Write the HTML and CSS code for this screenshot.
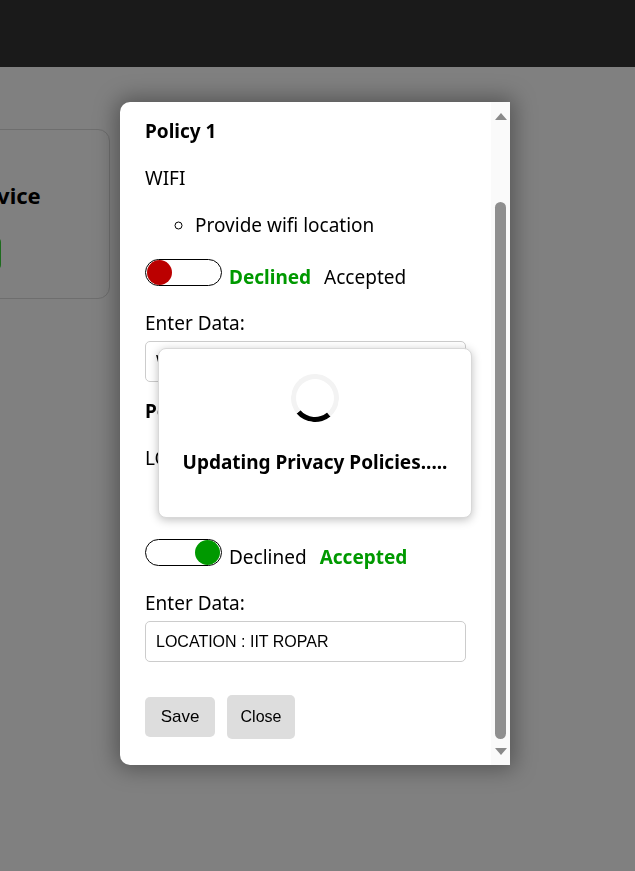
FILE: index.html
```html
<!DOCTYPE html>
<html>
<head>
<meta charset="utf-8">
<link rel="stylesheet" href="styles.css">
</head>
<body>
<header class="topbar"></header>
<main class="page">
  <section class="bg-card">
    <h2 class="bg-title">Service</h2>
    <div class="bg-btn"></div>
  </section>
</main>

<div class="modal">
  <div class="modal-content">
    <div class="policy">
      <h3 class="policy-title">Policy 1</h3>
      <p class="policy-name">WIFI</p>
      <ul class="policy-list"><li>Provide wifi location</li></ul>
      <div class="toggle-row">
        <span class="toggle off"><span class="knob"></span></span>
        <span class="state first active">Declined</span>
        <span class="state second">Accepted</span>
      </div>
      <label class="data-label">Enter Data:</label>
      <input class="data-input" type="text" value="WIFI : IIT ROPAR">
    </div>
    <div class="policy">
      <h3 class="policy-title">Policy 2</h3>
      <p class="policy-name">LOCATION</p>
      <ul class="policy-list"><li>Provide your location</li></ul>
      <div class="toggle-row">
        <span class="toggle on"><span class="knob"></span></span>
        <span class="state first">Declined</span>
        <span class="state second active">Accepted</span>
      </div>
      <label class="data-label">Enter Data:</label>
      <input class="data-input" type="text" value="LOCATION : IIT ROPAR">
    </div>
    <div class="actions">
      <button class="btn save">Save</button>
      <button class="btn close">Close</button>
    </div>
  </div>
  <div class="scrollbar">
    <span class="arrow up"></span>
    <div class="track"><div class="thumb"></div></div>
    <span class="arrow down"></span>
  </div>

  <div class="loader">
    <div class="spinner"></div>
    <p class="loader-text">Updating Privacy Policies.....</p>
  </div>
</div>
</body>
</html>
```
FILE: styles.css
```css
* { box-sizing: border-box; }
html, body { margin: 0; padding: 0; }
body {
  background: #808080;
  font-family: "Noto Sans", "DejaVu Sans", sans-serif;
  color: #000;
  width: 635px;
  height: 871px;
  overflow: hidden;
}
.topbar {
  height: 67px;
  background: #1a1a1a;
}
.page {
  display: flex;
  padding-top: 62px;
}
.bg-card {
  width: 300px;
  height: 170px;
  margin-left: -190px;
  border: 1px solid #6e6e6e;
  border-radius: 12px;
  padding: 50px 0 0 151px;
}
.bg-title {
  margin: 0;
  font-size: 22px;
  font-weight: 700;
  line-height: 30px;
  color: #000;
  white-space: nowrap;
}
.bg-btn {
  margin-top: 27px;
  margin-left: -61px;
  width: 100px;
  height: 33px;
  border-radius: 5px;
  background: #1d6b1d;
}

.modal {
  position: fixed;
  left: 120px;
  top: 102px;
  width: 390px;
  height: 663px;
  background: #fff;
  border-radius: 10px 0 0 10px;
  box-shadow: 0 0 22px 4px rgba(0,0,0,0.35);
  display: flex;
}
.modal-content {
  flex: 1;
  padding: 17px 0 0 25px;
  font-size: 19px;
  line-height: 24px;
}
.policy { display: flex; flex-direction: column; align-items: flex-start; }
.policy-title {
  margin: 0;
  font-size: 19px;
  font-weight: 700;
  line-height: 24px;
}
.policy + .policy .policy-title { margin-top: 17px; }
.policy-name { margin: 23px 0 0; }
.policy-list {
  margin: 23px 0 0;
  padding-left: 50px;
  list-style: circle;
}
.toggle-row {
  margin-top: 22px;
  display: flex;
  align-items: flex-start;
  height: 27px;
}
.toggle {
  width: 77px;
  height: 27px;
  border: 1px solid #000;
  border-radius: 14px;
  display: flex;
  align-items: center;
  padding: 0 1px;
  flex: none;
}
.toggle.on { justify-content: flex-end; }
.knob {
  width: 25px;
  height: 25px;
  border-radius: 50%;
}
.toggle.off .knob { background: #bb0000; }
.toggle.on .knob { background: #009900; }
.state { margin-top: 6px; white-space: nowrap; }
.state.first { margin-left: 7px; }
.state.second { margin-left: 13px; }
.state.active { color: #009900; font-weight: 700; }
.data-label { margin-top: 25px; display: block; }
.data-input {
  margin-top: 6px;
  width: 321px;
  height: 41px;
  border: 1px solid #cccccc;
  border-radius: 5px;
  padding: 0 10px;
  font-family: "Liberation Sans", Arial, sans-serif;
  font-size: 16px;
  color: #000;
  background: #fff;
  outline: none;
}
.actions {
  margin-top: 33px;
  display: flex;
  align-items: center;
  gap: 12px;
}
.btn {
  border: none;
  border-radius: 5px;
  background: #dddddd;
  font-family: "Liberation Sans", Arial, sans-serif;
  font-size: 17px;
  color: #000;
  padding: 0;
}
.btn.save { width: 70px; height: 40px; }
.btn.close { width: 68px; height: 44px; font-size: 16px; }

.scrollbar {
  width: 19px;
  background: #fafafa;
  display: flex;
  flex-direction: column;
  align-items: center;
  padding: 11px 0 10px;
}
.arrow {
  width: 0; height: 0;
  border-left: 6px solid transparent;
  border-right: 6px solid transparent;
}
.arrow.up { border-bottom: 7px solid #8a8a8a; }
.arrow.down { border-top: 7px solid #8a8a8a; }
.track {
  flex: 1;
  width: 100%;
  display: flex;
  justify-content: center;
  padding: 82px 0 9px;
}
.thumb {
  width: 11px;
  background: #8f8f8f;
  border-radius: 6px;
  height: 100%;
}

.loader {
  position: absolute;
  left: 38px;
  top: 246px;
  width: 314px;
  height: 170px;
  background: #fff;
  border-radius: 8px;
  border: 1px solid #d8d8d8;
  box-shadow: 0 2px 10px rgba(0,0,0,0.25);
  display: flex;
  flex-direction: column;
  align-items: center;
  padding-top: 25px;
}
.spinner {
  width: 48px;
  height: 48px;
  border-radius: 50%;
  border: 5px solid #f3f3f3;
  border-bottom-color: #000;
  transform: rotate(5deg);
}
.loader-text {
  margin: 28px 0 0;
  font-size: 19px;
  font-weight: 700;
  line-height: 24px;
  white-space: nowrap;
}
```
